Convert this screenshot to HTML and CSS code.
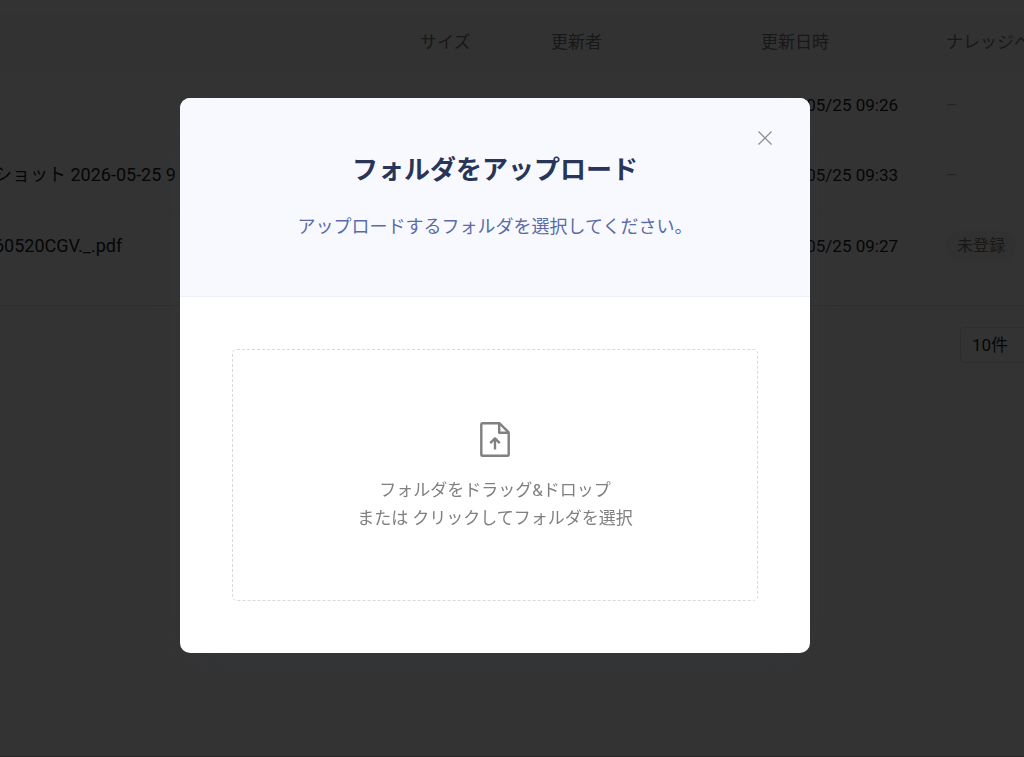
FILE: index.html
```html
<!DOCTYPE html>
<html lang="ja">
<head>
  <meta charset="UTF-8">
  <meta name="viewport" content="width=device-width, initial-scale=1.0">
  <title>フォルダをアップロード</title>
  <link rel="stylesheet" href="styles.css">
</head>
<body>

<main class="page">
  <table class="files">
    <thead>
      <tr>
        <th class="col-name"></th>
        <th class="col-size">サイズ</th>
        <th class="col-user">更新者</th>
        <th class="col-date">更新日時</th>
        <th class="col-base">ナレッジベース</th>
      </tr>
    </thead>
    <tbody>
      <tr>
        <td></td>
        <td></td>
        <td></td>
        <td>2026/05/25 09:26</td>
        <td class="muted">–</td>
      </tr>
      <tr>
        <td class="name">ショット 2026-05-25 9</td>
        <td></td>
        <td></td>
        <td>2026/05/25 09:33</td>
        <td class="muted">–</td>
      </tr>
      <tr>
        <td class="name">60520CGV._.pdf</td>
        <td></td>
        <td></td>
        <td>2026/05/25 09:27</td>
        <td><span class="tag">未登録</span></td>
      </tr>
    </tbody>
  </table>

  <div class="pagination">
    <select class="page-size" aria-label="表示件数">
      <option>10件</option>
    </select>
  </div>
</main>

<div class="overlay">
  <div class="modal" role="dialog" aria-modal="true" aria-labelledby="modal-title">
    <header class="modal-header">
      <button type="button" class="close" aria-label="閉じる">
        <svg width="14" height="14" viewBox="0 0 14 14" fill="none" stroke="currentColor" stroke-width="1.2">
          <path d="M.5.5l13 13M13.5.5l-13 13"/>
        </svg>
      </button>
      <h2 id="modal-title">フォルダをアップロード</h2>
      <p>アップロードするフォルダを選択してください。</p>
    </header>
    <div class="modal-body">
      <button type="button" class="dropzone">
        <svg width="30" height="35" viewBox="0 0 30 35" fill="none" stroke="currentColor" stroke-width="2.4" stroke-linejoin="round">
          <path d="M2.6 1.3H19.6L28.7 10.4V32.4Q28.7 33.7 27.4 33.7H2.6Q1.3 33.7 1.3 32.4V2.6Q1.3 1.3 2.6 1.3Z"/>
          <path d="M19.2 1.8V10.8H28.2"/>
          <path d="M15 27.5V16.5M10.2 21.2L15 16.4L19.8 21.2"/>
        </svg>
        <span>フォルダをドラッグ&amp;ドロップ<br>または クリックしてフォルダを選択</span>
      </button>
    </div>
  </div>
</div>

</body>
</html>
```

FILE: styles.css
```css
* {
  box-sizing: border-box;
}

body {
  margin: 0;
  background-color: #fff;
  font-family: Roboto, "Noto Sans CJK JP", sans-serif;
  font-size: 17px;
  color: #222;
  overflow: hidden;
}

button, select {
  font: inherit;
  color: inherit;
}

/* file list */
.page {
  width: calc(100% + 46px);
  min-height: 100vh;
  padding-top: 12px;
  border-bottom: 1px solid #bbb;
}

.files {
  width: 100%;
  margin-left: -6px;
  border-collapse: collapse;
  table-layout: fixed;
  line-height: 24px;
  white-space: nowrap;
}

.files th {
  height: 59px;
  padding: 0;
  background-color: #fafafa;
  font-weight: 400;
  text-align: left;
  color: #777;
}

.files td {
  height: 70px;
  padding: 0 0 2px;
  border-bottom: 1px solid #f2f2f2;
}

.files tbody tr:last-child td {
  height: 94px;
  padding-bottom: 24px;
  border-bottom-color: #e4e4e4;
}

.files .name {
  font-size: 18px;
}

.files .muted {
  color: #b0b0b0;
}

.col-name {
  width: 426px;
}

.col-size {
  width: 131px;
}

.col-user {
  width: 210px;
}

.col-date {
  width: 185px;
}

.tag {
  display: inline-block;
  padding: 0 11px;
  border-radius: 15px;
  background-color: #f5f5f5;
  font-size: 16px;
  line-height: 30px;
  color: #777;
}

.pagination {
  display: flex;
  justify-content: flex-end;
  padding-top: 21px;
}

.page-size {
  width: 110px;
  height: 36px;
  padding: 0 11px;
  border: 1px solid #e4e4e4;
  border-radius: 4px;
  background-color: #fff;
  appearance: none;
}

/* dialog */
.overlay {
  position: fixed;
  inset: 0;
  display: flex;
  justify-content: center;
  align-items: flex-start;
  padding: 98px 34px 0 0;
  background-color: rgba(0, 0, 0, 0.8);
}

.modal {
  width: 630px;
  border-radius: 10px;
  background-color: #fff;
  box-shadow: 0 10px 40px rgba(45, 55, 75, 0.15);
  overflow: hidden;
}

.modal-header {
  position: relative;
  padding: 53px 52px;
  border-bottom: 1px solid #eef1f8;
  background-color: #f8f9fe;
  text-align: center;
}

.modal-header h2 {
  margin: 0 0 24px;
  font-size: 26px;
  line-height: 38px;
  font-weight: 700;
  color: #293556;
}

.modal-header p {
  margin: 0;
  padding-bottom: 2px;
  font-size: 18px;
  line-height: 28px;
  color: #5a6ba8;
}

.close {
  position: absolute;
  top: 27px;
  right: 32px;
  display: flex;
  padding: 6px;
  border: none;
  background: none;
  color: #8a8c92;
  cursor: pointer;
}

.modal-body {
  padding: 52px;
}

.dropzone {
  display: flex;
  flex-direction: column;
  align-items: center;
  justify-content: center;
  gap: 19px;
  width: 100%;
  min-height: 252px;
  padding: 3px 0 0;
  border: 1px dashed #d9d9d9;
  border-radius: 5px;
  background-color: #fff;
  line-height: 28px;
  color: #808080;
  cursor: pointer;
}
```
